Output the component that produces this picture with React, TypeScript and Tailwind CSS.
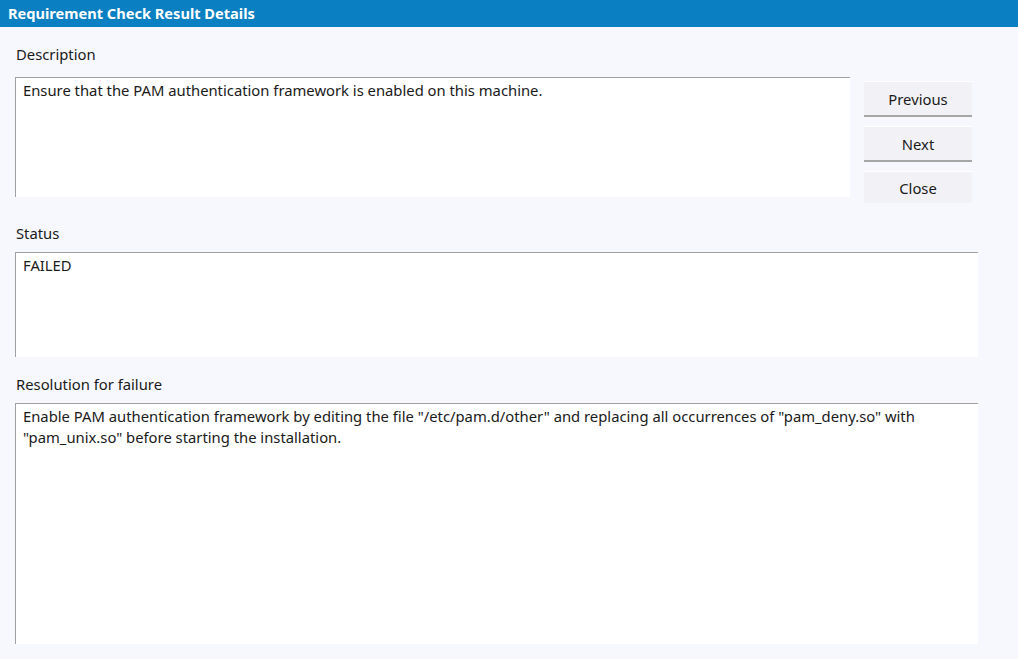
const font = { fontFamily: '"Noto Sans", "Open Sans", sans-serif' };

function Field({ text, className }: { text: React.ReactNode; className: string }) {
  return (
    <div
      className={
        "bg-white border-t border-l border-[#a0a0a0] pl-[7px] pt-[2px] text-[14.8px] leading-[21px] text-[#1a1a1a] " +
        className
      }
    >
      {text}
    </div>
  );
}

function Btn({ label, last }: { label: string; last?: boolean }) {
  return (
    <button
      className={
        "w-[108px] shrink-0 bg-[#f2f2f6] border-t border-white text-[14.8px] text-[#1a1a1a] flex items-center justify-center pt-[2px] " +
        (last ? "h-[32px]" : "h-[36px] border-b-2 border-b-[#a6a6a6]")
      }
    >
      {label}
    </button>
  );
}

export default function App() {
  return (
    <div className="w-[1018px] h-[659px] bg-[#f7f8fd] overflow-hidden" style={font}>
      <div className="h-[27px] bg-[#0a7fc2] text-white font-bold text-[14.6px] flex items-center px-[8px] pt-[1px]">
        Requirement Check Result Details
      </div>

      <div className="pl-[15px]">
        <div className="mt-[17px] h-[20px] text-[14.8px] leading-[20px] text-[#1a1a1a] pl-[1px]">Description</div>
        <div className="mt-[13px] flex items-start h-[120px]">
          <Field
            className="w-[835px] h-[120px] shrink-0"
            text="Ensure that the PAM authentication framework is enabled on this machine."
          />
          <div className="ml-[14px] pt-[4px] flex flex-col gap-[9px] shrink-0">
            <Btn label="Previous" />
            <Btn label="Next" />
            <Btn label="Close" last />
          </div>
        </div>

        <div className="mt-[26px] h-[20px] text-[14.8px] leading-[20px] text-[#1a1a1a] pl-[1px]">Status</div>
        <Field className="mt-[9px] w-[963px] h-[105px]" text="FAILED" />

        <div className="mt-[17px] h-[20px] text-[14.8px] leading-[20px] text-[#1a1a1a] pl-[1px]">Resolution for failure</div>
        <Field
          className="mt-[9px] w-[963px] h-[241px]"
          text={
            <>
              Enable PAM authentication framework by editing the file "/etc/pam.d/other" and replacing all occurrences of
              "pam_deny.so" with
              <br />
              "pam_unix.so" before starting the installation.
            </>
          }
        />
      </div>
    </div>
  );
}
